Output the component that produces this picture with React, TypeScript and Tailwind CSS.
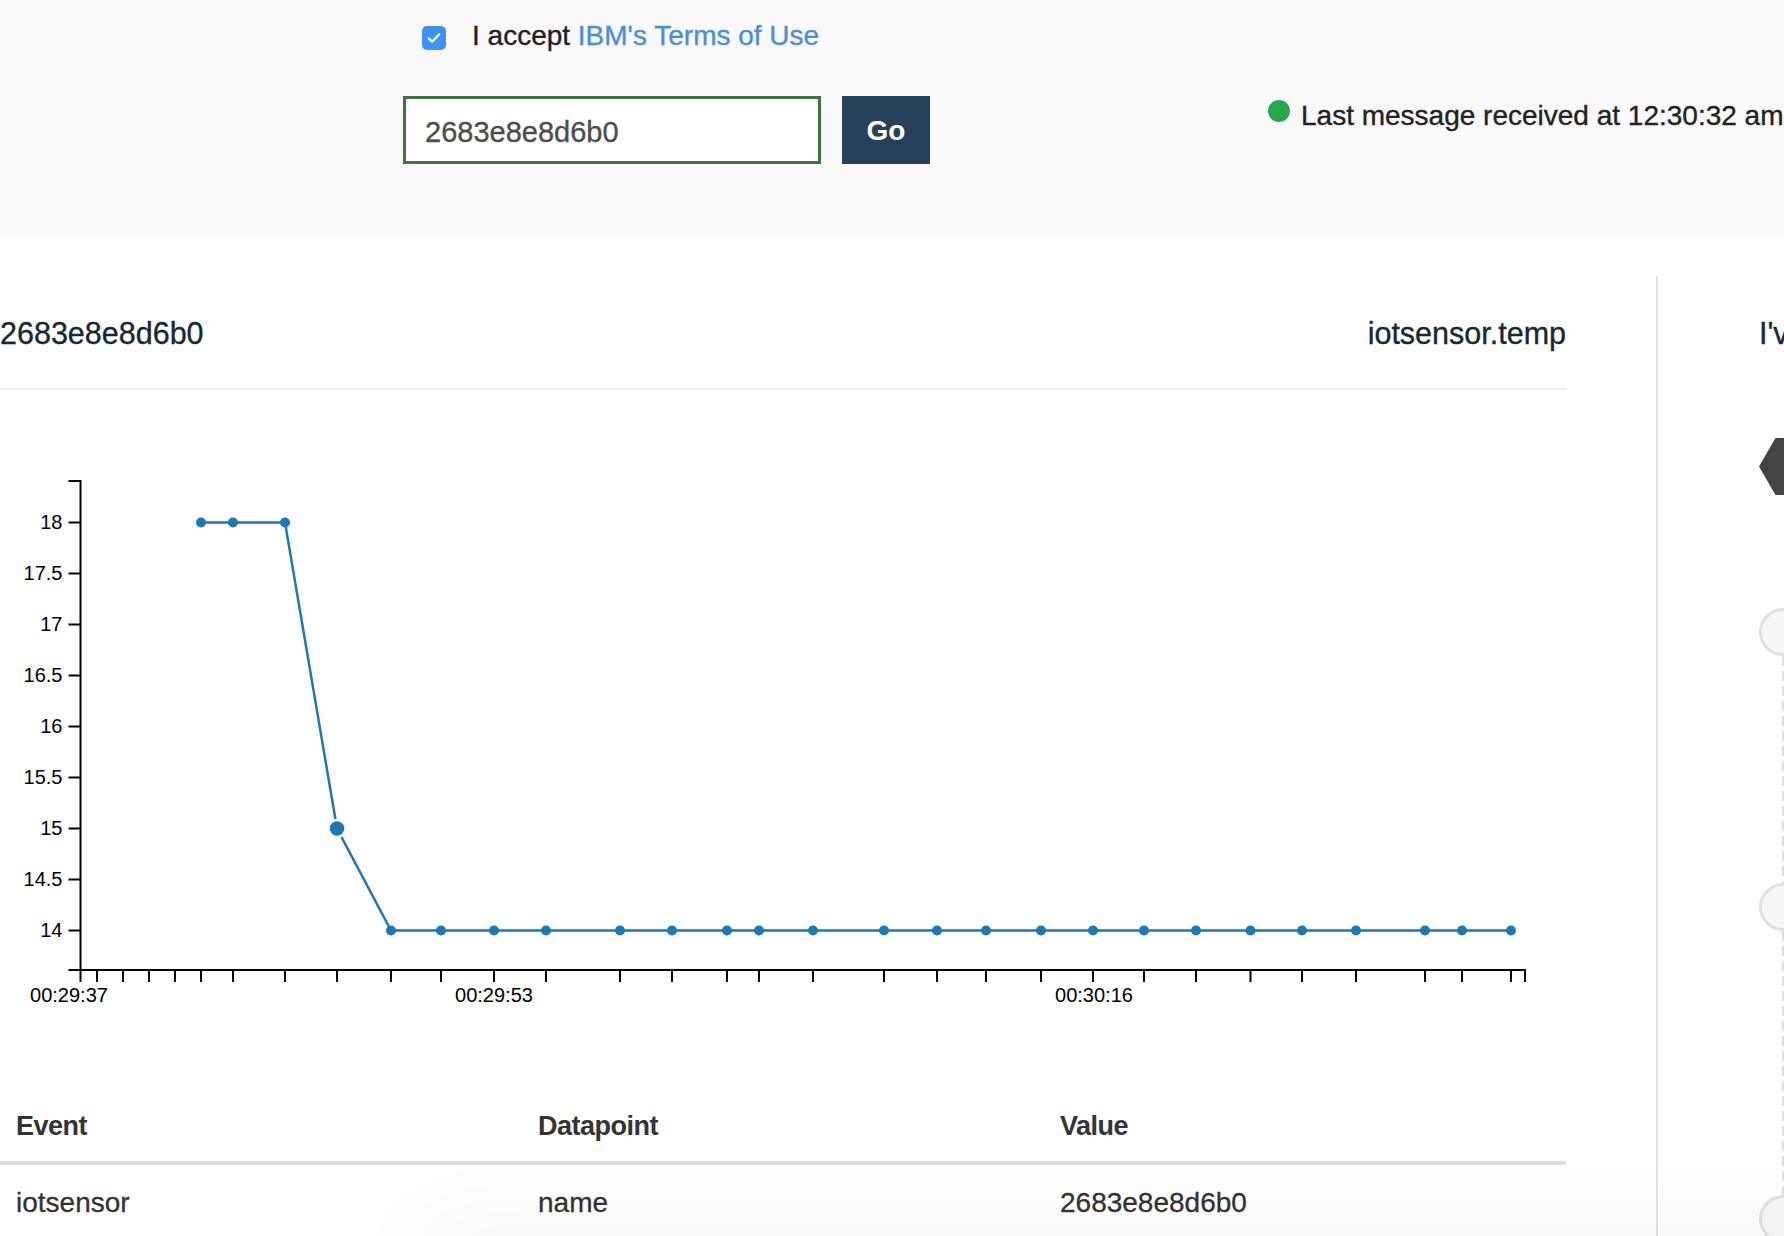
import React from 'react';

// x positions of the time ticks on the chart (one per received message)
const ticks = [
  97, 123, 149, 175, 201, 233, 285, 337, 391, 441, 494, 546, 620, 672, 727, 759, 813, 884, 937, 986,
  1041, 1093, 1144, 1196, 1250.5, 1302, 1356, 1425, 1462, 1511,
];

const points = ticks.slice(4).map((x, i) => ({ x, v: i < 3 ? 18 : i === 3 ? 15 : 14 }));

const yScale = (v: number) => 930.5 - (v - 14) * 102;

const yTicks = [18, 17.5, 17, 16.5, 16, 15.5, 15, 14.5, 14];

const xLabels = [
  { x: 69, t: '00:29:37' },
  { x: 494, t: '00:29:53' },
  { x: 1094, t: '00:30:16' },
];

const rows = [{ event: 'iotsensor', datapoint: 'name', value: '2683e8e8d6b0' }];

const Chart = () => (
  <svg width={1566} height={716} viewBox="0 390 1566 716" className="block">
    <g stroke="#000" strokeWidth={2} fill="none">
      <path d="M68.5,481H80.5V970H68.5" />
      <path d="M80.5,982V970H1525V982" />
      {yTicks.map((v) => (
        <line key={v} x1={68.5} x2={80.5} y1={yScale(v)} y2={yScale(v)} />
      ))}
      {ticks.map((x) => (
        <line key={x} x1={x} x2={x} y1={970} y2={982} />
      ))}
    </g>
    <g fontSize={20} fill="#000">
      {yTicks.map((v) => (
        <text key={v} x={62.5} y={yScale(v)} dy="0.32em" textAnchor="end">
          {v}
        </text>
      ))}
      {xLabels.map((l) => (
        <text key={l.t} x={l.x} y={988} dy="0.71em" textAnchor="middle">
          {l.t}
        </text>
      ))}
    </g>
    <polyline
      points={points.map((p) => `${p.x},${yScale(p.v)}`).join(' ')}
      fill="none"
      stroke="#1f77b4"
      strokeWidth={2.5}
    />
    {points.map((p) =>
      p.v === 15 ? (
        <circle key={p.x} cx={p.x} cy={yScale(p.v)} r={8.5} fill="#1f77b4" stroke="#fff" strokeWidth={2.5} />
      ) : (
        <circle key={p.x} cx={p.x} cy={yScale(p.v)} r={5} fill="#1f77b4" />
      )
    )}
  </svg>
);

const App = () => {
  return (
    <div className="relative h-[1236px] w-[1784px] overflow-hidden bg-white font-['Liberation_Sans',Arial,sans-serif]">
      <header className="flex h-[233px] bg-[#f9f9f9] [-webkit-text-stroke:0.35px_currentColor]">
        <div className="shrink-0 pl-[403px]">
          <div className="flex items-start pt-[22px]">
            <span className="ml-[19px] mt-[4px] flex h-[24px] w-[24px] items-center justify-center rounded-[5px] bg-[#3b93f7]">
              <svg width="18" height="18" viewBox="0 0 24 24" fill="none" stroke="#fff" strokeWidth="3" strokeLinecap="round" strokeLinejoin="round">
                <path d="M5 12.5l4.5 4.5L19 7" />
              </svg>
            </span>
            <p className="ml-[26px] whitespace-nowrap text-[28px] leading-[28px] text-[#222]">
              I accept <a className="text-[#4a8fd6]">IBM's Terms of Use</a>
            </p>
          </div>
          <div className="mt-[46px] flex">
            <div className="flex h-[68px] w-[418px] items-center border-[3px] border-[#3c763d] bg-white pl-[19px] pt-[5px] text-[29px] text-[#4d4d4d]">
              2683e8e8d6b0
            </div>
            <button className="ml-[21px] h-[68px] w-[88px] bg-[#254058] pt-[2px] text-[28px] font-bold text-white [-webkit-text-stroke:0]">
              Go
            </button>
          </div>
        </div>
        <div className="ml-[336px] mt-[98px] flex items-start whitespace-nowrap">
          <span className="h-[26px] w-[26px] shrink-0 rounded-full border-2 border-white bg-[#27a84a]" />
          <span className="ml-[9px] mt-[4px] text-[28px] leading-[28px] text-[#222]">
            Last message received at 12:30:32 am
          </span>
        </div>
      </header>

      <main className="flex h-[1003px]">
        <section className="w-[1566px] shrink-0">
          <div className="mt-[82px] flex items-baseline justify-between border-b-2 border-[#eee] pb-[37px] text-[30.5px] leading-[36px] text-[#152935] [-webkit-text-stroke:0.35px_currentColor]">
            <h2>2683e8e8d6b0</h2>
            <span>iotsensor.temp</span>
          </div>
          <Chart />
          <table className="w-full table-fixed border-collapse text-[#333]">
            <thead>
              <tr className="border-b-4 border-[#ddd]">
                <th className="px-4 pb-[15px] text-left text-[27px] font-bold leading-[40px] tracking-[-0.5px]">Event</th>
                <th className="px-4 pb-[15px] text-left text-[27px] font-bold leading-[40px] tracking-[-0.5px]">Datapoint</th>
                <th className="px-4 pb-[15px] text-left text-[27px] font-bold leading-[40px] tracking-[-0.5px]">Value</th>
              </tr>
            </thead>
            <tbody className="[-webkit-text-stroke:0.3px_currentColor]">
              {rows.map((r) => (
                <tr key={r.datapoint}>
                  <td className="px-4 pt-[18px] text-[28px] leading-[40px]">{r.event}</td>
                  <td className="px-4 pt-[18px] text-[28px] leading-[40px]">{r.datapoint}</td>
                  <td className="px-4 pt-[18px] text-[28px] leading-[40px]">{r.value}</td>
                </tr>
              ))}
            </tbody>
          </table>
        </section>

        <aside className="ml-[90px] mt-[43px] w-[400px] shrink-0 border-l-2 border-[#e2e2e2] pl-[101px] pt-[39px]">
          <h3 className="whitespace-nowrap text-[30.5px] leading-[36px] text-[#152935] [-webkit-text-stroke:0.35px_currentColor]">
            I've got your data
          </h3>
          <svg className="mt-[87px] block" width="66" height="57" viewBox="0 0 66 57">
            <polygon points="0,28.5 16.5,0 49.5,0 66,28.5 49.5,57 16.5,57" fill="#444" />
          </svg>
          <div className="mt-[113px] flex w-[48px] flex-col items-center">
            <span className="h-[48px] w-[48px] rounded-full border-[3px] border-[#e0e0e0] bg-[#f7f7f7]" />
            <span className="h-[227px] w-[2px] bg-[repeating-linear-gradient(to_bottom,#e0e0e0_0_10px,transparent_10px_15px)]" />
            <span className="h-[48px] w-[48px] rounded-full border-[3px] border-[#e0e0e0] bg-[#f7f7f7]" />
            <span className="h-[264px] w-[2px] bg-[repeating-linear-gradient(to_bottom,#e0e0e0_0_10px,transparent_10px_15px)]" />
            <span className="h-[48px] w-[48px] rounded-full border-[3px] border-[#e0e0e0] bg-[#f7f7f7]" />
          </div>
        </aside>
      </main>

      {/* soft shadow of the panel just below the fold */}
      <div className="pointer-events-none absolute bottom-[-40px] left-[420px] right-[-100px] h-[40px] shadow-[0_0_90px_rgba(0,0,0,0.07)]" />
    </div>
  );
};

export default App;
